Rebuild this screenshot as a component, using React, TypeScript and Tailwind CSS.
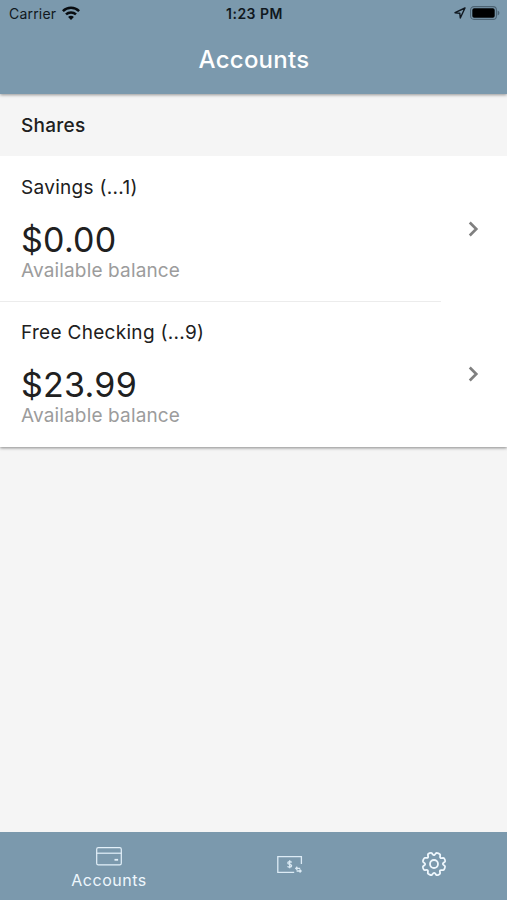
import { ChevronRight } from 'lucide-react';

interface Account {
  name: string;
  balance: string;
}

const accounts: Account[] = [
  { name: 'Savings (...1)', balance: '$0.00' },
  { name: 'Free Checking (...9)', balance: '$23.99' },
];

function WifiIcon() {
  return (
    <svg width="18" height="14" viewBox="0 0 18 14" fill="none" stroke="#080c10" strokeWidth="2.5">
      <path d="M.9 5.1a11.6 11.6 0 0 1 16.2 0" />
      <path d="M4 8.4a7.2 7.2 0 0 1 10 0" />
      <path d="M9 13.9 6.1 11a4 4 0 0 1 5.8 0z" fill="#080c10" stroke="none" />
    </svg>
  );
}

function StatusBar() {
  return (
    <div className="grid h-[26px] grid-cols-3 items-center pr-[7px] pl-[9px] text-[#101820]">
      <div className="flex items-center gap-[6px]">
        <span className="pt-px text-[14px] tracking-[0.2px]">Carrier</span>
        <WifiIcon />
      </div>
      <span className="pt-px text-center text-[14px] font-semibold tracking-[0.5px]">1:23 PM</span>
      <div className="flex items-center justify-end gap-[4px]">
        <svg width="12" height="12" viewBox="0 0 12 12" fill="none" stroke="#101820" strokeWidth="1.4" strokeLinejoin="round">
          <path d="M11 1 1 5.7l4.8.5.5 4.8z" />
        </svg>
        <svg width="30" height="14" viewBox="0 0 30 14">
          <rect x=".6" y=".6" width="25.8" height="12.8" rx="3.4" fill="none" stroke="#4c6373" strokeWidth="1.1" />
          <rect x="2.3" y="2.3" width="22.4" height="9.4" rx="1.8" fill="#000" />
          <path d="M27.6 4.5c2.4 1 2.4 4 0 5z" fill="#4c6373" />
        </svg>
      </div>
    </div>
  );
}

function AccountRow({ account, divider }: { account: Account; divider: boolean }) {
  return (
    <li className="flex h-[145px]">
      <div className={`w-[441px] border-t pt-[17px] pl-[21px] ${divider ? 'border-[#ececec]' : 'border-transparent'}`}>
        <p className="text-[19px] leading-[28px] tracking-[0.3px] text-[#202020]">{account.name}</p>
        <p className="mt-[17px] text-[34px] leading-[42px] tracking-[0.25px] text-[#202020]">{account.balance}</p>
        <p className="-mt-px text-[19px] leading-[22px] tracking-[0.15px] text-[#9c9c9c]">Available balance</p>
      </div>
      <div className="flex flex-1 items-center pt-px pl-[19px]">
        <ChevronRight size={26} strokeWidth={2.5} color="#808080" strokeLinecap="butt" strokeLinejoin="miter" />
      </div>
    </li>
  );
}

function CardIcon() {
  return (
    <svg width="26" height="19" viewBox="0 0 26 19" fill="none" stroke="#e4f1fa" strokeWidth="1.2">
      <rect x=".7" y=".7" width="24.6" height="17.1" rx="1.6" />
      <path d="M.7 6.2h24.6" />
      <path d="M18.5 12.8h3.6" strokeWidth="1.8" />
    </svg>
  );
}

function TransferIcon() {
  return (
    <svg width="26" height="20" viewBox="0 0 26 20" fill="none" stroke="#dcebf5" strokeWidth="1.3">
      <path d="M17.2 17.4H.8V1.6h23.6v7.5" />
      <path d="M14.6 7.4c-.4-.9-3.8-1.1-3.8.6 0 1.9 3.8.9 3.8 2.8 0 1.8-3.5 1.6-4 .4M12.7 5.3v8" />
      <path d="M19 13.4h4.2M20.3 11.8 18.8 13.4l1.5 1.5M19.6 16h4.4M22.6 14.4l1.5 1.6-1.5 1.5" />
    </svg>
  );
}

function GearIcon() {
  return (
    <svg width="26" height="26" viewBox="0 0 26 26" fill="none" stroke="#eef7fd" strokeWidth="1.8" strokeLinejoin="round">
      <path
        transform="rotate(22.5 13 13)"
        d="M10.8 2.1c.5-.8 3.9-.8 4.4 0l.7 2.1c.3.7 1 .9 1.6.6l1.7-1c1-.5 3.5 2 3 3l-1 1.7c-.3.6-.1 1.3.6 1.6l2.1.7c.8.5.8 3.9 0 4.4l-2.1.7c-.7.3-.9 1-.6 1.6l1 1.7c.5 1-2 3.5-3 3l-1.7-1c-.6-.3-1.3-.1-1.6.6l-.7 2.1c-.5.8-3.9.8-4.4 0l-.7-2.1c-.3-.7-1-.9-1.6-.6l-1.7 1c-1 .5-3.5-2-3-3l1-1.7c.3-.6.1-1.3-.6-1.6l-2.1-.7c-.8-.5-.8-3.9 0-4.4l2.1-.7c.7-.3.9-1 .6-1.6l-1-1.7c-.5-1 2-3.5 3-3l1.7 1c.6.3 1.3.1 1.6-.6z"
      />
      <circle cx="13" cy="13" r="4" />
    </svg>
  );
}

export default function App() {
  return (
    <div className="flex h-[900px] w-[507px] flex-col bg-[#f5f5f5] font-['Inter',sans-serif]">
      <header className="z-10 h-[94px] bg-[#7b99ad] shadow-[0_1px_3px_rgba(0,0,0,0.4)]">
        <StatusBar />
        <h1 className="pt-[16px] pl-px text-center text-[24px] leading-[36px] font-medium tracking-[0.25px] text-white">Accounts</h1>
      </header>

      <main className="flex-1">
        <section className="shadow-[0_1px_3px_rgba(0,0,0,0.45)]">
          <h2 className="h-[62px] bg-[#f5f5f5] pt-px pl-[21px] text-[19px] leading-[61px] font-medium tracking-[0.25px] text-[#202020]">
            Shares
          </h2>
          <ul className="h-[291px] bg-white">
            {accounts.map((account, i) => (
              <AccountRow key={account.name} account={account} divider={i > 0} />
            ))}
          </ul>
        </section>
      </main>

      <nav className="flex h-[68px] bg-[#7b99ad] text-[#eef7fd]">
        <button className="flex w-[218px] flex-col items-center pt-[15px]">
          <CardIcon />
          <span className="mt-[2px] text-[16px] leading-[24px] tracking-[0.5px]">Accounts</span>
        </button>
        <button className="flex w-[144px] justify-center pt-[23px]">
          <TransferIcon />
        </button>
        <button className="flex w-[144px] justify-center pt-[19px]">
          <GearIcon />
        </button>
      </nav>
    </div>
  );
}
